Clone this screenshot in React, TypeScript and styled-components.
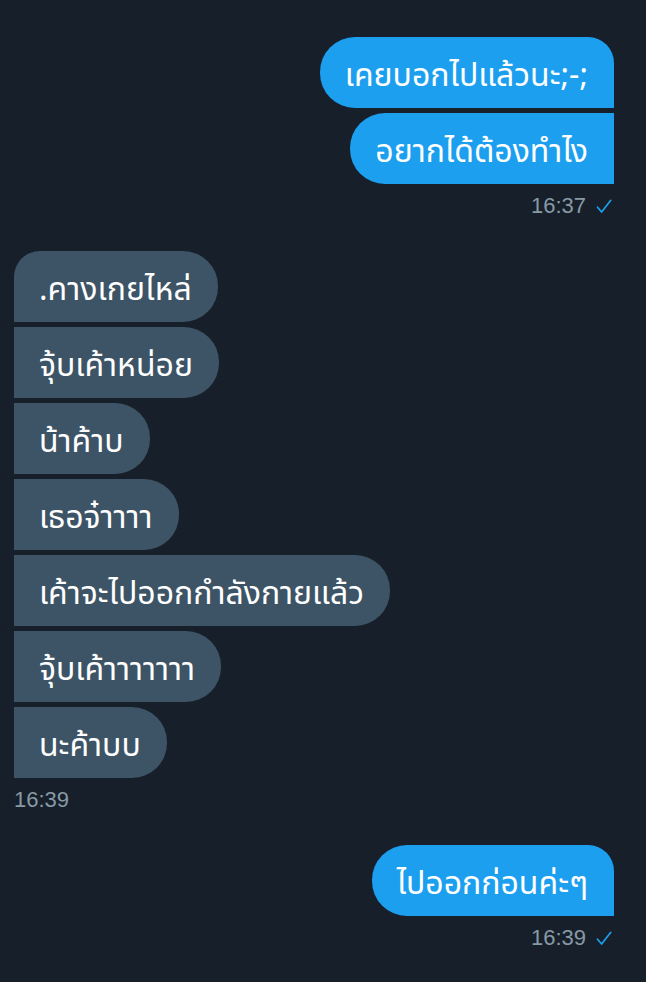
import React from "react";
import styled, { createGlobalStyle } from "styled-components";

const Global = createGlobalStyle`
  html, body {
    margin: 0;
    padding: 0;
    background: #17202a;
  }
  body {
    font-family: "Noto Sans Thai", "Noto Sans", "Liberation Sans", sans-serif;
  }
`;

const Thread = styled.div`
  display: flex;
  flex-direction: column;
  padding: 37px 32px 0 14px;
  min-height: 982px;
  box-sizing: border-box;
  background: #17202a;
`;

const Group = styled.div<{ $mine?: boolean }>`
  display: flex;
  flex-direction: column;
  align-items: ${(p) => (p.$mine ? "flex-end" : "flex-start")};
  gap: 5px;
  & + & {
    margin-top: 33px;
  }
`;

const Bubble = styled.div<{ $mine?: boolean; $first?: boolean }>`
  box-sizing: border-box;
  height: 71px;
  display: flex;
  align-items: center;
  padding: 7px 26px 0 25px;
  font-size: 32px;
  line-height: 1;
  color: #ffffff;
  white-space: nowrap;
  background: ${(p) => (p.$mine ? "#1d9ff0" : "#3d5466")};
  border-radius: ${(p) =>
    p.$mine
      ? `35px ${p.$first ? "26px" : "0"} 0 35px`
      : `${p.$first ? "26px" : "0"} 35px 35px 0`};
`;

const Meta = styled.div<{ $mine?: boolean }>`
  display: flex;
  align-items: center;
  gap: 10px;
  margin-top: 5px;
  height: 24px;
  padding-right: 2px;
  font-family: "Liberation Sans", Arial, sans-serif;
  font-size: 22px;
  color: #8899a6;
  align-self: ${(p) => (p.$mine ? "flex-end" : "flex-start")};
`;

const Check = () => (
  <svg width="16" height="15" viewBox="0 0 16 15" fill="none">
    <path
      d="M1.5 8.2 L5.6 13 L14.8 1.3"
      stroke="#1d9ff0"
      strokeWidth="1.7"
      strokeLinecap="round"
      strokeLinejoin="round"
    />
  </svg>
);

type Msg = { mine: boolean; texts: string[]; time: string };

const thread: Msg[] = [
  { mine: true, texts: ["เคยบอกไปแล้วนะ;-;", "อยากได้ต้องทำไง"], time: "16:37" },
  {
    mine: false,
    texts: [
      ".คางเกยไหล่",
      "จุ้บเค้าหน่อย",
      "น้าค้าบ",
      "เธอจ๋าาาา",
      "เค้าจะไปออกกำลังกายแล้ว",
      "จุ้บเค้าาาาาาา",
      "นะค้าบบ",
    ],
    time: "16:39",
  },
  { mine: true, texts: ["ไปออกก่อนค่ะๆ"], time: "16:39" },
];

export default function App() {
  return (
    <>
      <Global />
      <Thread>
        {thread.map((m, i) => (
          <Group key={i} $mine={m.mine}>
            {m.texts.map((t, j) => (
              <Bubble key={j} $mine={m.mine} $first={j === 0}>
                {t}
              </Bubble>
            ))}
            <Meta $mine={m.mine}>
              <span>{m.time}</span>
              {m.mine && <Check />}
            </Meta>
          </Group>
        ))}
      </Thread>
    </>
  );
}
